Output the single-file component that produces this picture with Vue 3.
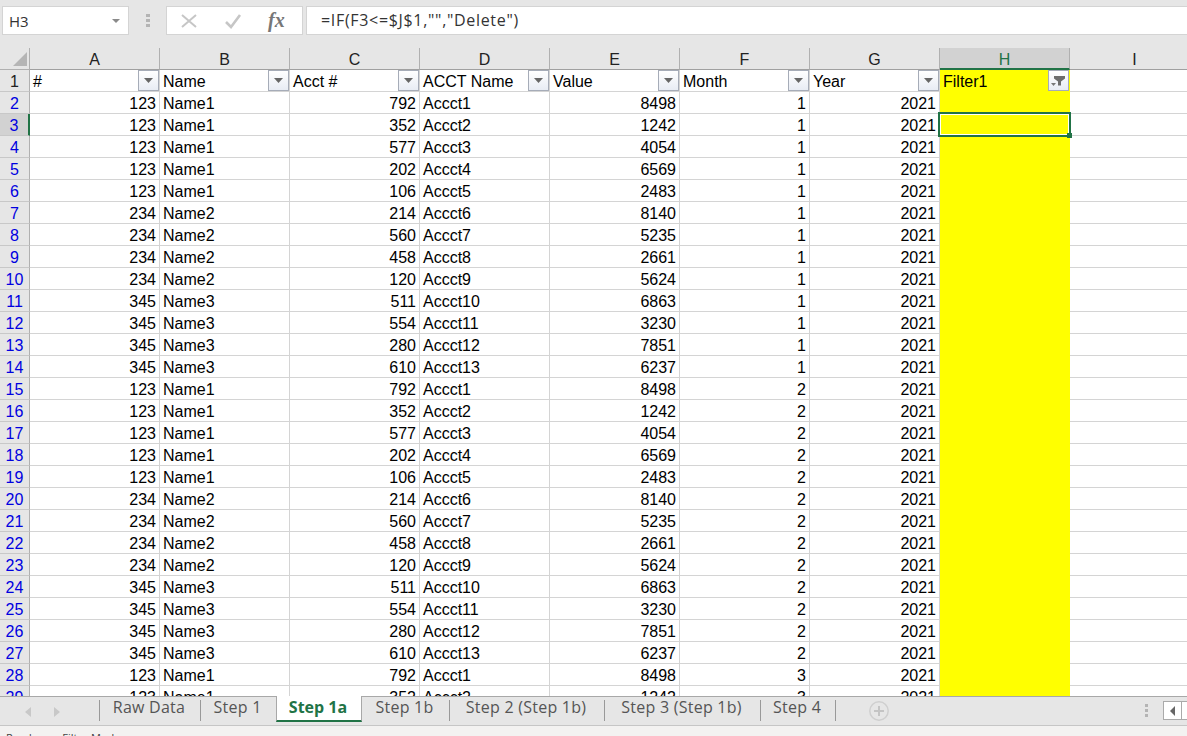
<template>
  <div class="excel">
    <div class="formula-bar">
      <div class="name-box">
        <span>H3</span>
        <svg width="8" height="4" viewBox="0 0 8 4"><path d="M0 0H8L4 4Z" fill="#8a8a8a" /></svg>
      </div>
      <div class="grip"><i></i><i></i><i></i></div>
      <div class="fx-buttons">
        <svg width="18" height="18" viewBox="0 0 18 18"><path d="M2 3L16 15M16 3L2 15" stroke="#c6c6c6" stroke-width="2" fill="none" /></svg>
        <svg width="20" height="18" viewBox="0 0 20 18"><path d="M3 10L8 15L17 3" stroke="#c6c6c6" stroke-width="2.6" fill="none" /></svg>
        <span class="fx">fx</span>
      </div>
      <div class="formula">=IF(F3&lt;=$J$1,"","Delete")</div>
    </div>

    <div class="sheet">
      <div class="corner"><svg width="14" height="14" viewBox="0 0 14 14"><path d="M14 0V14H0Z" fill="#b5b5b5" /></svg></div>
      <div v-for="c in columns" :key="c" class="col-head" :class="{ active: c === 'H' }">{{ c }}</div>

      <div class="row-head first">1</div>
      <div v-for="h in headers" :key="h" class="cell head" :class="{ yellow: h === 'Filter1' }">
        <span>{{ h }}</span>
        <span class="filter-btn">
          <svg v-if="h === 'Filter1'" width="15" height="12" viewBox="0 0 15 12">
            <path d="M3 1H14V3.5L10 6.5V10.5H7V6.5L3 3.5Z" fill="#6d6d6d" />
            <path d="M0 8H5L2.5 11Z" fill="#777" />
          </svg>
          <svg v-else width="9" height="5" viewBox="0 0 9 5"><path d="M0 0H9L4.5 5Z" fill="#666" /></svg>
        </span>
      </div>
      <div class="cell"></div>

      <template v-for="r in rows" :key="r.n">
        <div class="row-head" :class="{ active: r.n === 3 }">{{ r.n }}</div>
        <div class="cell num">{{ r.id }}</div>
        <div class="cell">{{ r.name }}</div>
        <div class="cell num">{{ r.acct }}</div>
        <div class="cell">{{ r.acctName }}</div>
        <div class="cell num">{{ r.value }}</div>
        <div class="cell num">{{ r.month }}</div>
        <div class="cell num">2021</div>
        <div class="cell yellow">
          <div v-if="r.n === 3" class="selection"><b></b></div>
        </div>
        <div class="cell"></div>
      </template>
    </div>

    <div class="tab-bar">
      <svg class="arrows" width="50" height="12" viewBox="0 0 50 12">
        <path d="M7 1V11L1 6Z" fill="#c8c8c8" />
        <path d="M30 1V11L36 6Z" fill="#c8c8c8" />
      </svg>
      <div class="tabs">
        <div
          v-for="t in tabs"
          :key="t.label"
          class="tab"
          :class="{ current: t.label === 'Step 1a' }"
          :style="{ width: t.width + 'px' }"
        >{{ t.label }}</div>
      </div>
      <svg class="add-sheet" width="20" height="20" viewBox="0 0 20 20">
        <circle cx="10" cy="10" r="9.2" fill="none" stroke="#cfcfcf" stroke-width="1.5" />
        <path d="M10 5V15M5 10H15" stroke="#c4c4c4" stroke-width="2" />
      </svg>
      <div class="spacer"></div>
      <div class="grip small"><i></i><i></i><i></i></div>
      <div class="scroll-left">
        <svg width="6" height="10" viewBox="0 0 6 10"><path d="M5 0V10L0 5Z" fill="#666" /></svg>
      </div>
      <div class="scroll-right"></div>
    </div>

    <div class="status-bar">
      <span>Ready</span>
      <span>Filter Mode</span>
    </div>
  </div>
</template>

<script setup>
const columns = ['A', 'B', 'C', 'D', 'E', 'F', 'G', 'H', 'I']
const headers = ['#', 'Name', 'Acct #', 'ACCT Name', 'Value', 'Month', 'Year', 'Filter1']
const tabs = [
  { label: 'Raw Data', width: 101 },
  { label: 'Step 1', width: 76 },
  { label: 'Step 1a', width: 86 },
  { label: 'Step 1b', width: 87 },
  { label: 'Step 2 (Step 1b)', width: 155 },
  { label: 'Step 3 (Step 1b)', width: 156 },
  { label: 'Step 4', width: 76 }
]

const base = [
  [123, 'Name1', 792, 8498],
  [123, 'Name1', 352, 1242],
  [123, 'Name1', 577, 4054],
  [123, 'Name1', 202, 6569],
  [123, 'Name1', 106, 2483],
  [234, 'Name2', 214, 8140],
  [234, 'Name2', 560, 5235],
  [234, 'Name2', 458, 2661],
  [234, 'Name2', 120, 5624],
  [345, 'Name3', 511, 6863],
  [345, 'Name3', 554, 3230],
  [345, 'Name3', 280, 7851],
  [345, 'Name3', 610, 6237]
]

const rows = []
for (let i = 0; i < 28; i++) {
  const b = base[i % 13]
  rows.push({
    n: i + 2,
    id: b[0],
    name: b[1],
    acct: b[2],
    acctName: 'Accct' + (i % 13 + 1),
    value: b[3],
    month: Math.floor(i / 13) + 1
  })
}
</script>

<style>
html, body {
  margin: 0;
  overflow: hidden;
}
</style>

<style scoped>
.excel {
  width: 1187px;
  height: 736px;
  display: flex;
  flex-direction: column;
  overflow: hidden;
  background: #e6e6e6;
  font-family: "Liberation Sans", Arial, sans-serif;
}

.formula-bar {
  height: 48px;
  flex: none;
  box-sizing: border-box;
  padding: 6px 0 13px 2px;
  display: flex;
  align-items: stretch;
  font-family: "Open Sans", sans-serif;
}

.name-box {
  width: 127px;
  box-sizing: border-box;
  background: #fff;
  border: 1px solid #d4d4d4;
  display: flex;
  align-items: center;
  justify-content: space-between;
  padding: 0 8px 0 6px;
  font-size: 15px;
  color: #333;
}

.grip {
  width: 37px;
  display: flex;
  flex-direction: column;
  align-items: center;
  justify-content: center;
  gap: 2px;
}

.grip i {
  width: 4px;
  height: 3px;
  background: #b4b4b4;
}

.fx-buttons {
  width: 137px;
  box-sizing: border-box;
  background: #fff;
  border: 1px solid #d4d4d4;
  display: flex;
  align-items: center;
  gap: 25px;
  padding-left: 13px;
}

.fx {
  font-family: "Liberation Serif", serif;
  font-style: italic;
  font-weight: bold;
  font-size: 20px;
  color: #777;
}

.formula {
  flex: 1;
  margin-left: 3px;
  background: #fff;
  border: 1px solid #d4d4d4;
  border-right: none;
  padding-left: 14px;
  line-height: 27px;
  font-size: 16px;
  letter-spacing: 0.68px;
  color: #333;
}

.sheet {
  flex: none;
  height: 648px;
  overflow: hidden;
  display: grid;
  grid-template-columns: 30px repeat(9, 130px);
  grid-auto-rows: 22px;
  background: #fff;
  font-size: 16px;
  color: #000;
}

.corner {
  background: #e6e6e6;
  border-right: 1px solid #b0b0b0;
  border-bottom: 1px solid #b0b0b0;
  box-sizing: border-box;
  display: flex;
  align-items: flex-end;
  justify-content: flex-end;
  padding: 0 2px 3px 0;
}

.col-head {
  background: #e6e6e6;
  border-right: 1px solid #b0b0b0;
  border-bottom: 1px solid #a0a0a0;
  box-sizing: border-box;
  text-align: center;
  line-height: 23px;
  color: #222;
}

.col-head.active {
  background: #d2d2d2;
  border-bottom: 2px solid #217346;
  color: #217346;
}

.row-head {
  background: #e6e6e6;
  border-right: 1px solid #b0b0b0;
  border-bottom: 1px solid #c8c8c8;
  box-sizing: border-box;
  text-align: center;
  line-height: 23px;
  color: #0000e0;
}

.row-head.first {
  color: #222;
}

.row-head.active {
  background: #d2d2d2;
  border-right: 2px solid #217346;
}

.cell {
  position: relative;
  box-sizing: border-box;
  border-right: 1px solid #d4d4d4;
  border-bottom: 1px solid #d4d4d4;
  padding: 0 3px;
  line-height: 23px;
  white-space: nowrap;
}

.cell.num {
  text-align: right;
}

.cell.head {
  display: flex;
  justify-content: space-between;
  padding-right: 0;
}

.cell.yellow {
  background: #ffff00;
  border-color: #ffff00;
}

.filter-btn {
  width: 21px;
  height: 21px;
  box-sizing: border-box;
  border: 1px solid #a6acb8;
  background: linear-gradient(#fff, #e8ecf4);
  display: flex;
  align-items: center;
  justify-content: center;
}

.selection {
  position: absolute;
  z-index: 2;
  left: -2px;
  top: -2px;
  right: -2px;
  bottom: -2px;
  border: 2px solid #217346;
  box-shadow: inset 0 0 0 1px #fff;
}

.selection b {
  position: absolute;
  right: -3px;
  bottom: -3px;
  width: 5px;
  height: 5px;
  background: #217346;
}

.tab-bar {
  height: 28px;
  flex: none;
  display: flex;
  align-items: flex-start;
  border-top: 1px solid #a8a8a8;
  border-bottom: 1px solid #c6c6c6;
  font-family: "Open Sans", sans-serif;
}

.arrows {
  margin: 9px 0 0 24px;
  flex: none;
}

.tabs {
  display: flex;
  margin-left: 25px;
  height: 26px;
}

.tab {
  box-sizing: border-box;
  text-align: center;
  padding-right: 2px;
  line-height: 15px;
  height: 21px;
  margin-top: 3px;
  font-size: 16px;
  letter-spacing: 0.25px;
  color: #555;
  border-left: 1px solid #999;
}

.tab.current + .tab {
  border-left: none;
}

.tab:last-child {
  border-right: 1px solid #999;
}

.tab.current {
  position: relative;
  margin-top: -1px;
  height: 26px;
  line-height: 22px;
  background: #fff;
  color: #217346;
  font-weight: bold;
  letter-spacing: 0;
  border: 1px solid #a8a8a8;
  border-top: none;
  border-bottom: 2px solid #217346;
}

.add-sheet {
  flex: none;
  margin: 4px 0 0 33px;
}

.spacer {
  flex: 1;
}

.grip.small {
  width: 3px;
  height: 13px;
  margin: 7px 15px 0 0;
}

.grip.small i {
  width: 3px;
}

.scroll-left {
  width: 19px;
  height: 19px;
  margin-top: 4px;
  box-sizing: border-box;
  background: #fff;
  border: 1px solid #aaa;
  display: flex;
  align-items: center;
  justify-content: center;
}

.scroll-right {
  width: 5px;
  height: 19px;
  margin-top: 4px;
  box-sizing: border-box;
  background: #fff;
  border: 1px solid #aaa;
  border-left: none;
  border-right: none;
}

.status-bar {
  flex: none;
  height: 10px;
  overflow: hidden;
  box-sizing: border-box;
  background: #f3f2f1;
  display: flex;
  gap: 25px;
  padding: 3px 0 0 6px;
  font-family: "Open Sans", sans-serif;
  font-size: 11px;
  line-height: 18px;
  color: #444;
}
</style>
